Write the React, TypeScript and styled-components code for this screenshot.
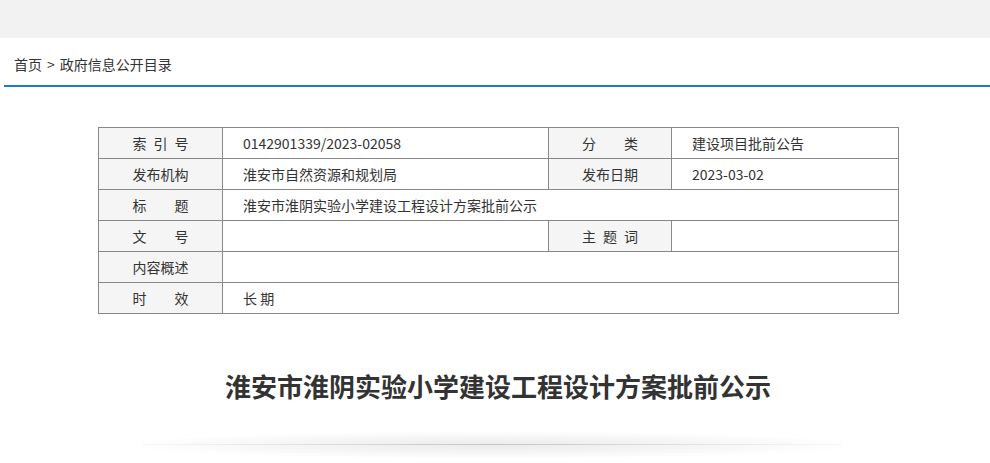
import React from "react";
import styled, { createGlobalStyle } from "styled-components";

const Global = createGlobalStyle`
  html, body { margin: 0; padding: 0; background: #fff; }
  body { font-family: "Microsoft YaHei", "Noto Sans CJK SC", "Noto Sans", sans-serif; color: #333; }
`;

const TopBand = styled.div`
  height: 38px;
  background: #f2f2f2;
`;

const Crumb = styled.div`
  margin-left: 4px;
  height: 49px;
  box-sizing: border-box;
  padding: 17px 0 0 10px;
  border-bottom: 2px solid #1580c8;
  font-size: 14px;
  line-height: 18px;
  color: #333;
`;

const Sep = styled.span`
  margin: 0 5px;
`;

const Main = styled.div`
  width: 800px;
  margin: 40px auto 0;
  transform: translateX(3px);
`;

const Table = styled.table`
  width: 800px;
  border-collapse: collapse;
  table-layout: fixed;
  font-size: 14px;
  color: #333;
`;

const Label = styled.td`
  height: 30px;
  padding: 0;
  border: 1px solid #888;
  background: #f5f5f5;
  text-align: center;
  white-space: pre;
  line-height: 30px;
`;

const Value = styled.td`
  height: 30px;
  padding: 0 0 0 20px;
  border: 1px solid #888;
  background: #fff;
  line-height: 30px;
  white-space: pre;
`;

const Title = styled.h1`
  margin: 55px 0 0;
  padding-left: 6px;
  text-align: center;
  font-size: 26px;
  font-weight: bold;
  line-height: 34px;
  color: #333;
`;

const Divider = styled.div`
  width: 700px;
  height: 26px;
  margin: 29px auto 0;
  transform: translateX(-3px);
  position: relative;
  background: radial-gradient(ellipse at center, rgba(0,0,0,0.08) 0%, rgba(0,0,0,0.035) 45%, rgba(0,0,0,0) 75%);
  &::after {
    content: "";
    position: absolute;
    left: 0;
    right: 0;
    top: 12px;
    height: 1px;
    background: linear-gradient(to right, rgba(0,0,0,0.02), rgba(0,0,0,0.16) 50%, rgba(0,0,0,0.02));
  }
`;

export default function App() {
  return (
    <>
      <Global />
      <TopBand />
      <Crumb>
        首页<Sep>&gt;</Sep>政府信息公开目录
      </Crumb>
      <Main>
        <Table>
          <colgroup>
            <col style={{ width: 124 }} />
            <col style={{ width: 326 }} />
            <col style={{ width: 123 }} />
            <col style={{ width: 227 }} />
          </colgroup>
          <tbody>
            <tr>
              <Label>索{"\u2002"}引{"\u2002"}号</Label>
              <Value>0142901339/2023-02058</Value>
              <Label>分　　类</Label>
              <Value>建设项目批前公告</Value>
            </tr>
            <tr>
              <Label>发布机构</Label>
              <Value>淮安市自然资源和规划局</Value>
              <Label>发布日期</Label>
              <Value>2023-03-02</Value>
            </tr>
            <tr>
              <Label>标　　题</Label>
              <Value colSpan={3}>淮安市淮阴实验小学建设工程设计方案批前公示</Value>
            </tr>
            <tr>
              <Label>文　　号</Label>
              <Value></Value>
              <Label>主{"\u2002"}题{"\u2002"}词</Label>
              <Value></Value>
            </tr>
            <tr>
              <Label>内容概述</Label>
              <Value colSpan={3}></Value>
            </tr>
            <tr>
              <Label>时　　效</Label>
              <Value colSpan={3}>长 期</Value>
            </tr>
          </tbody>
        </Table>
      </Main>
      <Title>淮安市淮阴实验小学建设工程设计方案批前公示</Title>
      <Divider />
    </>
  );
}
